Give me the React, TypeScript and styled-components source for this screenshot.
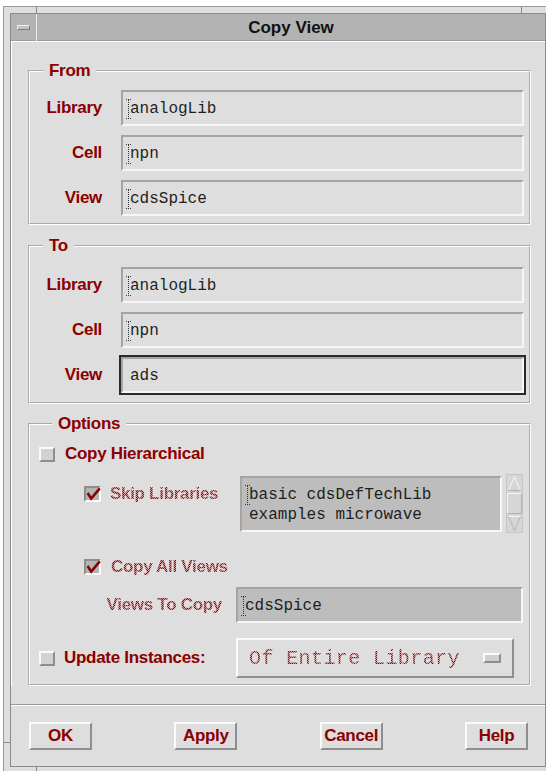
import React from "react";
import styled, { createGlobalStyle, css } from "styled-components";

const RED = "#8b0000";
const DOT = "#a00000";
const FACE = "#dedede";
const SHADE = "#8e8e8e";
const HILITE = "#fbfbfb";
const DISABLED_BG = "#bdbdbd";

const GlobalStyle = createGlobalStyle`
  html, body {
    margin: 0;
    background: #ffffff;
    overflow: hidden;
  }
  body {
    font-family: "Liberation Sans", Arial, sans-serif;
  }
`;

// insensitive motif text: a red checker stipple clipped to the glyphs
const stipple = css`
  color: transparent;
  background-color: #d39494;
  background-image: repeating-conic-gradient(${DOT} 0 25%, transparent 0 50%);
  background-size: 2px 2px;
  -webkit-background-clip: text;
  background-clip: text;
`;

const raised = css`
  border: 2px solid;
  border-color: ${HILITE} ${SHADE} ${SHADE} ${HILITE};
`;

const sunken = css`
  border: 2px solid;
  border-color: #a4a4a4 #f6f6f6 #f6f6f6 #a4a4a4;
`;

const labelFont = css`
  font-family: "Liberation Sans", Arial, sans-serif;
  font-size: 17px;
  font-weight: bold;
  letter-spacing: -0.3px;
  white-space: nowrap;
`;

const monoFont = css`
  font-family: "Liberation Mono", "Courier New", monospace;
  font-size: 16px;
  color: #1e1e1e;
  white-space: pre;
`;

/* window manager frame */
const Frame = styled.div`
  margin: 6px 0 0 3px;
  width: 543px;
  height: 765px;
  overflow: hidden;
  box-sizing: border-box;
  padding: 6px 0 0 6px;
  border-top: 1px solid #9a9a9a;
  border-left: 1px solid #9a9a9a;
  background-color: ${FACE};
  background-image: linear-gradient(#8a8a8a, #8a8a8a),
    linear-gradient(#8a8a8a, #8a8a8a), linear-gradient(#8a8a8a, #8a8a8a),
    linear-gradient(#8a8a8a, #8a8a8a);
  background-repeat: no-repeat;
  background-origin: border-box;
  background-size: 1px 7px, 1px 7px, 7px 1px, 1px 12px;
  background-position: 33px 0, 518px 0, 0 736px, 33px 760px;
`;

const Window = styled.div`
  width: 536px;
  box-sizing: border-box;
  border: 1px solid #8a8a8a;
  display: flex;
  flex-direction: column;
  background: ${FACE};
`;

const TitleBar = styled.div`
  height: 28px;
  box-sizing: border-box;
  display: flex;
  background: #b3b3b3;
  border-bottom: 1px solid #ffffff;
  box-shadow: inset 0 -1px 0 #9c9c9c;
`;

const MinBox = styled.div`
  width: 25px;
  display: flex;
  align-items: center;
  justify-content: center;
  border-right: 1px solid #ececec;
`;

const MinBar = styled.span`
  width: 13px;
  height: 5px;
  box-sizing: border-box;
  border: 1px solid;
  border-color: #f0f0f0 #7c7c7c #7c7c7c #f0f0f0;
  background: #c4c4c4;
`;

const Title = styled.div`
  flex: 1;
  display: flex;
  align-items: center;
  justify-content: center;
  font-size: 17px;
  font-weight: bold;
  color: #111;
`;

const Body = styled.div`
  display: flex;
  flex-direction: column;
  padding: 20px 14px 0 17px;
  box-shadow: inset 1px 0 0 #ffffff;
`;

const Group = styled.fieldset<{ $top: number; $pad: string }>`
  margin: ${(p) => p.$top}px 0 0;
  padding: ${(p) => p.$pad};
  min-width: 0;
  border: 2px groove #ffffff;
`;

const Legend = styled.legend`
  margin-left: 13px;
  padding: 0 6px;
  line-height: 18px;
  color: ${RED};
  ${labelFont};
`;

const FieldGrid = styled.div`
  display: grid;
  grid-template-columns: 72px 1fr;
  column-gap: 19px;
  row-gap: 9px;
  align-items: center;
`;

const Label = styled.label`
  text-align: right;
  color: ${RED};
  ${labelFont};
`;

const Entry = styled.div<{ $disabled?: boolean; $focused?: boolean }>`
  flex: 1;
  height: 36px;
  box-sizing: border-box;
  display: flex;
  align-items: center;
  padding: 2px 0 0 ${(p) => (p.$focused ? 7 : 3)}px;
  ${sunken};
  background: ${(p) => (p.$disabled ? DISABLED_BG : FACE)};
  ${monoFont};
  ${(p) =>
    p.$focused &&
    css`
      outline: 2px solid #2a2a2a;
    `}
`;

const CaretMark = styled.svg`
  flex-shrink: 0;
  margin-right: -1px;
`;

const Caret = () => (
  <CaretMark width="5" height="20" viewBox="0 0 5 20" aria-hidden>
    <path d="M2.5 1V19" stroke="#333" strokeDasharray="1 1" />
    <path d="M0 0.5H5M0 19.5H5" stroke="#333" strokeDasharray="1 1" />
  </CaretMark>
);

const OptionsBody = styled.div`
  display: flex;
  flex-direction: column;
`;

const CheckRow = styled.div<{ $indent?: boolean; $top?: number }>`
  height: 20px;
  display: flex;
  align-items: center;
  gap: 10px;
  margin-top: ${(p) => p.$top ?? 0}px;
  padding-left: ${(p) => (p.$indent ? 45 : 0)}px;
`;

const ListRow = styled.div`
  display: flex;
  align-items: flex-start;
  gap: 4px;
  margin-top: 10px;
`;

const EntryRow = styled.div`
  display: flex;
  align-items: center;
  margin-top: 10px;
`;

const MenuRow = styled.div`
  display: flex;
  align-items: center;
  margin-top: 15px;
`;

const Lead = styled.div<{ $indent?: boolean; $right?: boolean; $top?: number }>`
  width: 197px;
  flex-shrink: 0;
  box-sizing: border-box;
  display: flex;
  align-items: center;
  gap: 9px;
  margin-top: ${(p) => p.$top ?? 0}px;
  justify-content: ${(p) => (p.$right ? "flex-end" : "flex-start")};
  padding-left: ${(p) => (p.$indent ? 45 : 0)}px;
  padding-right: ${(p) => (p.$right ? 14 : 0)}px;
`;

const OptLabel = styled.span`
  color: ${RED};
  ${labelFont};
`;

const Dim = styled.span`
  ${labelFont};
  ${stipple};
`;

const Box = styled.span<{ $checked?: boolean }>`
  display: inline-flex;
  flex-shrink: 0;
  box-sizing: border-box;
  width: ${(p) => (p.$checked ? 17 : 16)}px;
  height: ${(p) => (p.$checked ? 16 : 15)}px;
  border: 2px solid;
  border-color: ${(p) =>
    p.$checked
      ? `${SHADE} ${HILITE} ${HILITE} ${SHADE}`
      : `${HILITE} ${SHADE} ${SHADE} ${HILITE}`};
  background: ${(p) => (p.$checked ? "#b4b4b4" : "#d2d2d2")};
`;

const CheckGlyph = styled.svg`
  flex-shrink: 0;
  margin: -1px 0 0 0;
`;

const CheckBox = ({ checked }: { checked?: boolean }) => (
  <Box $checked={checked}>
    {checked && (
      <CheckGlyph width="15" height="14" viewBox="0 0 15 14">
        <path
          d="M1.6 6 L5.2 11.6 L13.8 1.4"
          fill="none"
          stroke={RED}
          strokeWidth="2.6"
        />
      </CheckGlyph>
    )}
  </Box>
);

const ListBox = styled.div`
  flex: 1;
  height: 56px;
  margin-top: 2px;
  box-sizing: border-box;
  padding: 7px 0 0 3px;
  ${sunken};
  background: ${DISABLED_BG};
  ${monoFont};
  line-height: 20px;
`;

const ListLine = styled.div<{ $indent?: boolean }>`
  height: 20px;
  display: flex;
  align-items: center;
  padding-left: ${(p) => (p.$indent ? 4 : 0)}px;
`;

const ScrollBar = styled.div`
  width: 17px;
  height: 59px;
  box-sizing: border-box;
  display: flex;
  flex-direction: column;
  align-items: center;
  border: 1px solid #c6c6c6;
  background: #d6d6d6;
`;

const Thumb = styled.div`
  width: 15px;
  flex: 1;
  margin: 1px 0;
  box-sizing: border-box;
  border: 1px solid;
  border-color: #f6f6f6 #b2b2b2 #b2b2b2 #f6f6f6;
`;

const Arrow = ({ down }: { down?: boolean }) => (
  <svg width="15" height="17" viewBox="0 0 15 17">
    {down ? (
      <>
        <path d="M1 1.5H14" stroke="#f6f6f6" />
        <path d="M1.5 1.5L7.5 15.5L13.5 1.5" fill="none" stroke="#b4b4b4" />
      </>
    ) : (
      <>
        <path d="M1.5 15.5L7.5 1.5L13.5 15.5" fill="none" stroke="#f6f6f6" />
        <path d="M1 15.5H14" stroke="#b4b4b4" />
      </>
    )}
  </svg>
);

const OptionMenu = styled.div`
  width: 278px;
  height: 40px;
  box-sizing: border-box;
  display: flex;
  align-items: center;
  justify-content: space-between;
  padding: 0 11px 0 11px;
  ${raised};
  background: ${FACE};
`;

const MenuText = styled.span`
  font-family: "Liberation Mono", "Courier New", monospace;
  font-size: 20px;
  letter-spacing: 0.4px;
  white-space: pre;
  ${stipple};
`;

const MenuMark = styled.span`
  width: 18px;
  height: 10px;
  box-sizing: border-box;
  ${raised};
  background: #d0d0d0;
`;

const Footer = styled.div`
  margin-top: 18px;
  display: flex;
  justify-content: space-between;
  padding: 17px 17px 16px 18px;
  border-top: 1px solid #9a9a9a;
  box-shadow: inset 0 1px 0 #ffffff;
`;

const PushButton = styled.button`
  width: 63px;
  height: 28px;
  padding: 0;
  box-sizing: border-box;
  ${raised};
  background: ${FACE};
  color: ${RED};
  ${labelFont};
`;

const fromRows = [
  ["Library", "analogLib"],
  ["Cell", "npn"],
  ["View", "cdsSpice"],
];

export default function App() {
  return (
    <>
      <GlobalStyle />
      <Frame>
        <Window>
          <TitleBar>
            <MinBox>
              <MinBar />
            </MinBox>
            <Title>Copy View</Title>
          </TitleBar>
          <Body>
            <Group $top={0} $pad="10px 5px 7px 0">
              <Legend>From</Legend>
              <FieldGrid>
                {fromRows.map(([label, value]) => (
                  <React.Fragment key={label}>
                    <Label>{label}</Label>
                    <Entry>
                      <Caret />
                      {value}
                    </Entry>
                  </React.Fragment>
                ))}
              </FieldGrid>
            </Group>

            <Group $top={12} $pad="12px 5px 9px 0">
              <Legend>To</Legend>
              <FieldGrid>
                <Label>Library</Label>
                <Entry>
                  <Caret />
                  analogLib
                </Entry>
                <Label>Cell</Label>
                <Entry>
                  <Caret />
                  npn
                </Entry>
                <Label>View</Label>
                <Entry $focused>ads</Entry>
              </FieldGrid>
            </Group>

            <Group $top={11} $pad="11px 6px 6px 9px">
              <Legend>Options</Legend>
              <OptionsBody>
                <CheckRow>
                  <CheckBox />
                  <OptLabel>Copy Hierarchical</OptLabel>
                </CheckRow>

                <ListRow>
                  <Lead $indent $top={10}>
                    <CheckBox checked />
                    <Dim>Skip Libraries</Dim>
                  </Lead>
                  <ListBox>
                    <ListLine>
                      <Caret />
                      basic cdsDefTechLib
                    </ListLine>
                    <ListLine $indent>examples microwave</ListLine>
                  </ListBox>
                  <ScrollBar>
                    <Arrow />
                    <Thumb />
                    <Arrow down />
                  </ScrollBar>
                </ListRow>

                <CheckRow $indent $top={24}>
                  <CheckBox checked />
                  <Dim>Copy All Views</Dim>
                </CheckRow>

                <EntryRow>
                  <Lead $right>
                    <Dim>Views To Copy</Dim>
                  </Lead>
                  <Entry $disabled>
                    <Caret />
                    cdsSpice
                  </Entry>
                </EntryRow>

                <MenuRow>
                  <Lead>
                    <CheckBox />
                    <OptLabel>Update Instances:</OptLabel>
                  </Lead>
                  <OptionMenu>
                    <MenuText>Of Entire Library</MenuText>
                    <MenuMark />
                  </OptionMenu>
                </MenuRow>
              </OptionsBody>
            </Group>
          </Body>
          <Footer>
            <PushButton>OK</PushButton>
            <PushButton>Apply</PushButton>
            <PushButton>Cancel</PushButton>
            <PushButton>Help</PushButton>
          </Footer>
        </Window>
      </Frame>
    </>
  );
}
